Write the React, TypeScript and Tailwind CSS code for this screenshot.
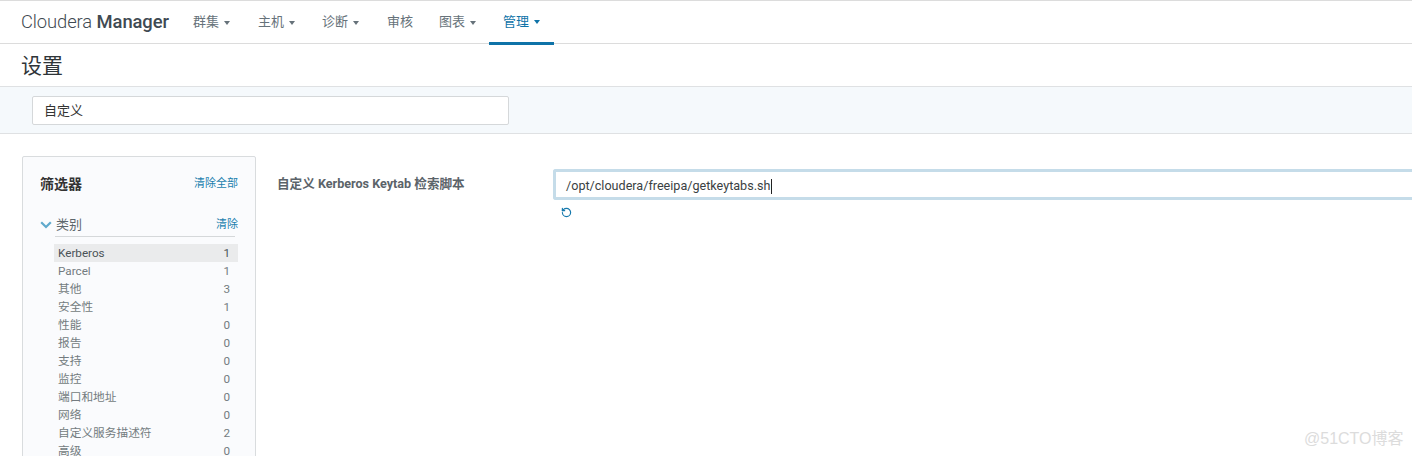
import { RotateCcw } from "lucide-react";

const cjk = "font-['Roboto','Noto_Sans_CJK_SC',sans-serif]";

const navItems = [
  { label: "群集", caret: true, w: "w-[65px]" },
  { label: "主机", caret: true, w: "w-[64px]" },
  { label: "诊断", caret: true, w: "w-[65px]" },
  { label: "审核", caret: false, w: "w-[52px]" },
  { label: "图表", caret: true, w: "w-[61px]" },
];

const categories: [string, number][] = [
  ["Kerberos", 1],
  ["Parcel", 1],
  ["其他", 3],
  ["安全性", 1],
  ["性能", 0],
  ["报告", 0],
  ["支持", 0],
  ["监控", 0],
  ["端口和地址", 0],
  ["网络", 0],
  ["自定义服务描述符", 2],
  ["高级", 0],
];

function Caret({ color }: { color: string }) {
  return <span className={`ml-[5px] mt-[1px] inline-block border-x-[3.5px] border-t-[4px] border-x-transparent ${color}`} />;
}

export default function App() {
  return (
    <div className={`h-[456px] w-[1412px] overflow-hidden bg-white ${cjk}`}>
      {/* Top nav */}
      <header className="flex h-[44px] items-center border-y border-[#dcdcdc] pl-[21px]">
        <div className="w-[161px] text-[18.4px] tracking-[-0.1px] text-[#3f4a52]">
          <span className="font-light">Cloudera</span> <span className="font-medium">Manager</span>
        </div>
        <nav className="flex h-full items-center">
          {navItems.map((item) => (
            <a key={item.label} className={`flex items-center pl-[11px] text-[13px] text-[#66727a] ${item.w}`}>
              {item.label}
              {item.caret && <Caret color="border-t-[#66727a]" />}
            </a>
          ))}
          <a className="-mb-px flex h-[44px] w-[65px] items-center border-b-[3px] border-[#0f73a8] pl-[14px] pt-px text-[13px] text-[#0f73a8]">
            管理
            <Caret color="border-t-[#0f73a8]" />
          </a>
        </nav>
      </header>

      {/* Title */}
      <div className="flex h-[43px] items-center border-b border-[#dfe1e3] pl-[21px] pt-[3px] text-[21px] text-[#2f3539]">
        设置
      </div>

      {/* Search strip */}
      <div className="flex h-[47px] items-center border-b border-[#dfe1e3] bg-[#f5f9fc] pl-[32px]">
        <div className="flex h-[29px] w-[477px] items-center rounded-[2px] border border-[#d5d8da] bg-white pl-[11px] pt-[2px] text-[13px] text-[#333]">
          自定义
        </div>
      </div>

      <div className="flex pl-[22px] pt-[22px]">
        {/* Filter panel */}
        <aside className="h-[320px] w-[234px] shrink-0 rounded-[2px] border border-[#d9dcde] bg-[#fafbfd] pl-[17px] pr-[17px] pt-[18px]">
          <div className="flex h-[18px] items-center justify-between">
            <span className="text-[14px] font-bold text-[#333]">筛选器</span>
            <a className="text-[11px] text-[#1b7fae]">清除全部</a>
          </div>
          <div className="mt-[23px] flex h-[18px] items-center justify-between">
            <div className="flex items-center">
              <svg width="12" height="8" viewBox="0 0 12 8" className="mr-[4px]">
                <path d="M1.2 1.2 6 6l4.8-4.8" fill="none" stroke="#5fa9cc" strokeWidth="2.2" />
              </svg>
              <span className="text-[13px] text-[#5d666c]">类别</span>
            </div>
            <a className="text-[11px] text-[#1b7fae]">清除</a>
          </div>
          <div className="ml-[15px] mr-[3px] mt-[2px] border-t border-[#d5d8da]" />
          <ul className="ml-[14px] mt-[7px]">
            {categories.map(([name, count], i) => (
              <li
                key={name}
                className={`flex h-[18px] items-center justify-between pl-[4px] pr-[8px] pt-[2px] text-[11.7px] ${
                  i === 0 ? "bg-[#eaebec] text-[#4b5358]" : "text-[#737b80]"
                }`}
              >
                <span>{name}</span>
                <span>{count}</span>
              </li>
            ))}
          </ul>
        </aside>

        {/* Setting row */}
        <div className="flex min-w-0 flex-1 pl-[21px] pt-[13px]">
          <div className="w-[276px] shrink-0 pt-[6px] text-[12.6px] font-bold leading-[18px] text-[#5b6369]">
            自定义 Kerberos Keytab 检索脚本
          </div>
          <div className="min-w-0 flex-1">
            <div className="flex h-[31px] items-center rounded-l-[3px] border-y-[3px] border-l-[3px] border-[#c5dce9] bg-white pl-[10px] pt-[3px] text-[12.6px] text-[#3a3f43]">
              /opt/cloudera/freeipa/getkeytabs.sh
              <span className="ml-px h-[15px] w-px bg-[#222]" />
            </div>
            <RotateCcw size={11} strokeWidth={2.6} className="ml-[8px] mt-[7px] text-[#1679ad]" />
          </div>
        </div>
      </div>

      {/* Watermark */}
      <div className="absolute left-[1304px] top-[427px] font-['Liberation_Sans','Noto_Sans_CJK_SC',sans-serif] text-[16px] text-[#dcdcdc]">
        @51CTO博客
      </div>
    </div>
  );
}
